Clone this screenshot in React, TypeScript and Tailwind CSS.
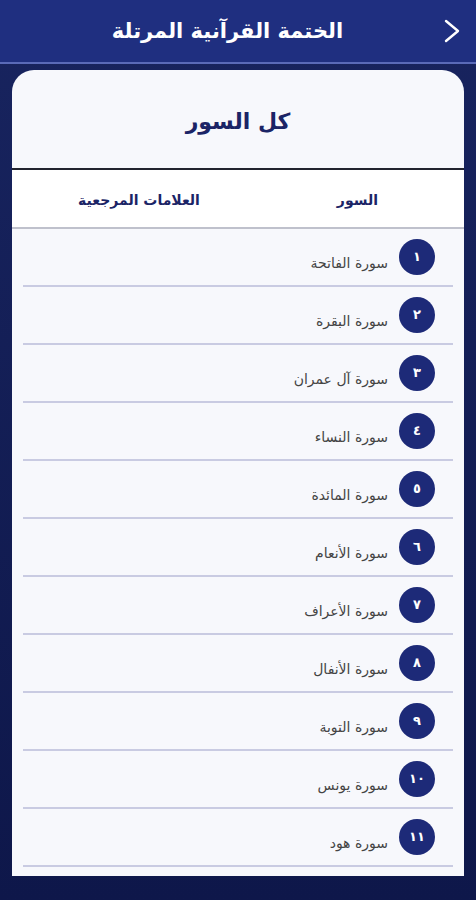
const surahs = [
  { num: "١", name: "سورة الفاتحة" },
  { num: "٢", name: "سورة البقرة" },
  { num: "٣", name: "سورة آل عمران" },
  { num: "٤", name: "سورة النساء" },
  { num: "٥", name: "سورة المائدة" },
  { num: "٦", name: "سورة الأنعام" },
  { num: "٧", name: "سورة الأعراف" },
  { num: "٨", name: "سورة الأنفال" },
  { num: "٩", name: "سورة التوبة" },
  { num: "١٠", name: "سورة يونس" },
  { num: "١١", name: "سورة هود" },
];

export default function App() {
  return (
    <div
      dir="rtl"
      className="w-[476px] h-[900px] flex flex-col overflow-hidden bg-gradient-to-b from-[#18245f] to-[#0e174a]"
      style={{ fontFamily: '"DejaVu Sans", "Noto Sans", sans-serif' }}
    >
      {/* Top bar */}
      <div className="h-[64px] shrink-0 bg-[#1f2f80] border-b-2 border-[#5a6ab8] flex items-center">
        <div className="w-[56px] flex justify-center pl-2">
          <svg width="18" height="26" viewBox="0 0 18 26" fill="none">
            <path d="M3 3 L15 13 L3 23" stroke="white" strokeWidth="2.4" strokeLinecap="round" strokeLinejoin="round" />
          </svg>
        </div>
        <div className="flex-1 text-center text-white text-[21px] font-bold pl-[35px] pt-0.5">
          الختمة القرآنية المرتلة
        </div>
      </div>

      {/* Card */}
      <div className="mx-3 mt-[6px] h-[806px] bg-[#f7f8fc] rounded-t-[22px] flex flex-col">
        <div className="h-[100px] shrink-0 flex items-center justify-center border-b-2 border-[#22232e]">
          <h1 className="text-[#1b2466] text-[22px] font-bold pt-1">كل السور</h1>
        </div>
        <div className="h-[59px] shrink-0 flex items-center border-b-2 border-[#bfc1cc] bg-white text-[#1b2466] text-[14px] font-bold">
          <div className="w-[200px] pr-[86px] pt-1">السور</div>
          <div className="flex-1 text-center pl-[2px] pt-1 tracking-[1px]">العلامات المرجعية</div>
        </div>
        <div className="flex flex-col">
          {surahs.map((s) => (
            <div
              key={s.num}
              className="mx-[11px] h-[58px] shrink-0 flex items-center gap-[11px] pr-[18px] border-b-2 border-[#c9cbe2]"
            >
              <div className="w-9 h-9 rounded-full bg-[#1d2a78] flex items-center justify-center text-white text-[13px] font-bold">
                {s.num}
              </div>
              <span className="text-[#444] text-[14px] pt-3">{s.name}</span>
            </div>
          ))}
        </div>
      </div>
    </div>
  );
}
